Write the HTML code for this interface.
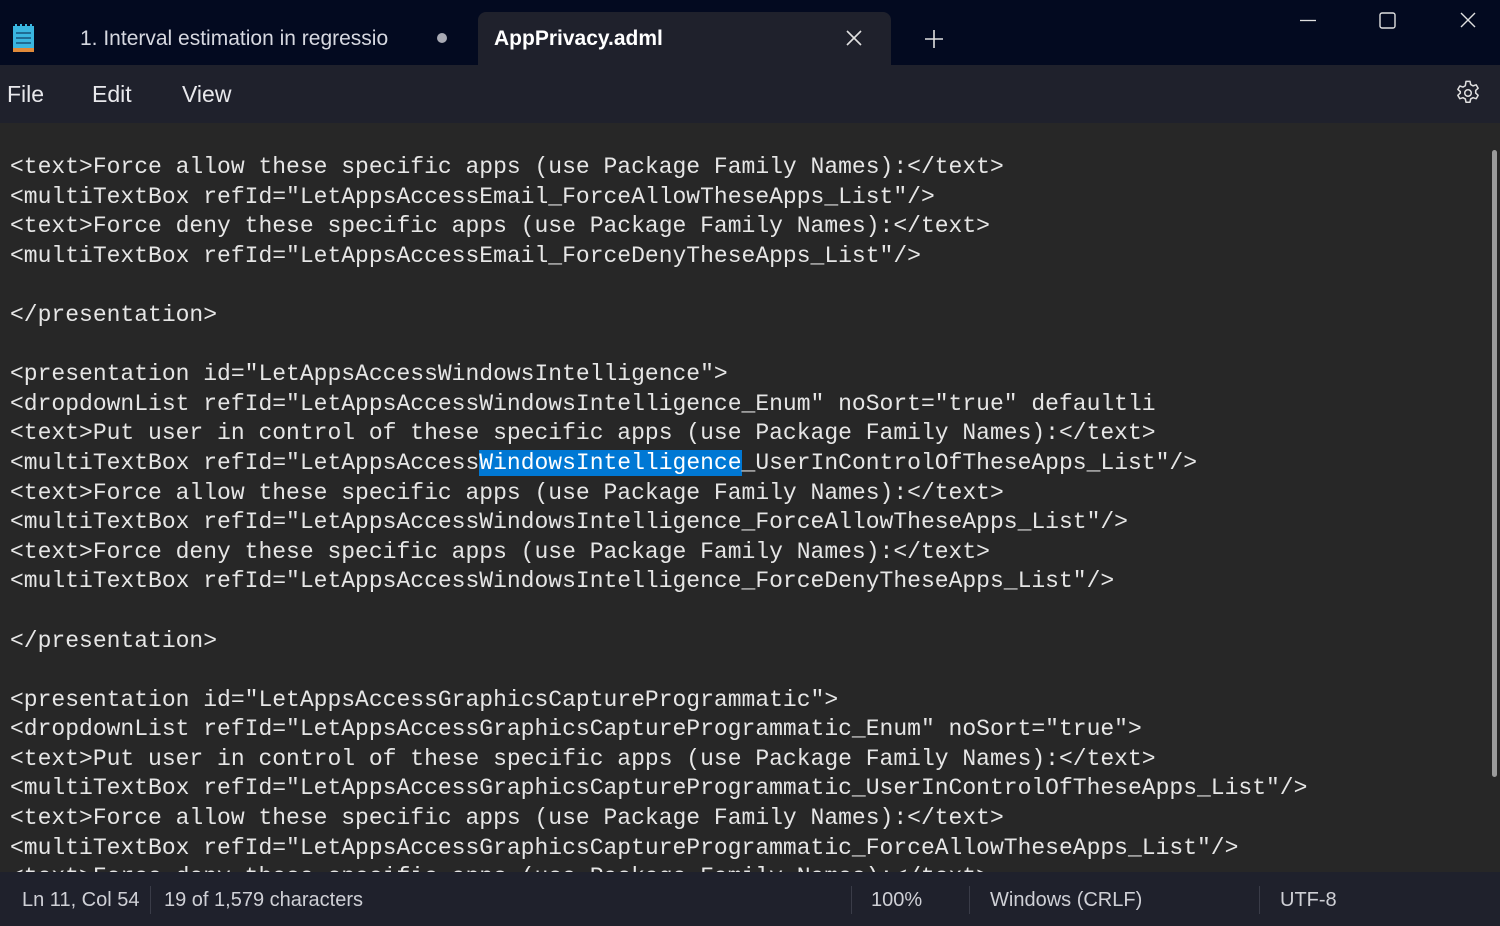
<!DOCTYPE html>
<html><head><meta charset="utf-8"><style>
*{margin:0;padding:0;box-sizing:border-box}
body{width:1500px;height:926px;overflow:hidden;background:#272727;font-family:"Liberation Sans",sans-serif;position:relative}
#title{position:absolute;left:0;top:0;width:1500px;height:65px;background:#030a20}
#tab{position:absolute;left:478px;top:12px;width:413px;height:54px;background:#1f212c;border-radius:8px 8px 0 0}
.t{position:absolute;color:#e8e8ec;font-size:21px}
#menu{position:absolute;left:0;top:65px;width:1500px;height:58px;background:#1f212c}
#ed{position:absolute;left:10px;top:153px;font-family:"Liberation Mono",monospace;font-size:23px;line-height:29.6px;color:#e6e6e6;white-space:pre;height:719px;overflow:hidden}
.hl{background:#0078d4;color:#fff}
#sb{position:absolute;left:1492px;top:150px;width:5px;height:627px;background:#9b9b9b;border-radius:3px}
#status{position:absolute;left:0;top:872px;width:1500px;height:54px;background:#1f212c;color:#cfd0d6;font-size:20px}
.sep{position:absolute;top:14px;width:1px;height:28px;background:#3a3c48}
</style></head><body>
<div id="title">
<svg style="position:absolute;left:12px;top:24px" width="23" height="29" viewBox="0 0 23 29"><rect x="1" y="2" width="21" height="24" fill="#3ab6e0"/><rect x="1" y="24" width="21" height="4" fill="#e08a3a"/><g stroke="#1a5a80" stroke-width="1.6"><line x1="4" y1="9" x2="19" y2="9"/><line x1="4" y1="14" x2="19" y2="14"/><line x1="4" y1="19" x2="19" y2="19"/></g><g fill="#3ab6e0"><rect x="3" y="0" width="2" height="3"/><rect x="8" y="0" width="2" height="3"/><rect x="13" y="0" width="2" height="3"/><rect x="18" y="0" width="2" height="3"/></g></svg>
<div class="t" style="left:80px;top:27px;color:#d6d8e0">1. Interval estimation in regressio</div>
<div style="position:absolute;left:437px;top:33px;width:10px;height:10px;border-radius:50%;background:#a8aab4"></div>
<div id="tab"></div>
<div class="t" style="left:494px;top:27px;font-weight:bold;color:#fff">AppPrivacy.adml</div>
<svg style="position:absolute;left:846px;top:30px" width="16" height="16"><path d="M1 1L15 15M15 1L1 15" stroke="#e0e0e0" stroke-width="1.6"/></svg>
<svg style="position:absolute;left:924px;top:29px" width="20" height="20"><path d="M10 1V19M1 10H19" stroke="#e0e0e0" stroke-width="1.6"/></svg>
<svg style="position:absolute;left:1300px;top:19px" width="16" height="3"><path d="M0 1.5H16" stroke="#e0e0e0" stroke-width="1.3"/></svg>
<svg style="position:absolute;left:1379px;top:12px" width="17" height="17"><rect x="1" y="1" width="15" height="15" rx="2" fill="none" stroke="#e0e0e0" stroke-width="1.4"/></svg>
<svg style="position:absolute;left:1460px;top:12px" width="16" height="16"><path d="M1 1L15 15M15 1L1 15" stroke="#e0e0e0" stroke-width="1.4"/></svg>
</div>
<div id="menu">
<div class="t" style="left:7px;top:16px;font-size:23px">File</div>
<div class="t" style="left:92px;top:16px;font-size:23px">Edit</div>
<div class="t" style="left:182px;top:16px;font-size:23px">View</div>
<svg style="position:absolute;left:1454px;top:14px" width="28" height="28" viewBox="0 0 24 24"><path d="M10.3 2h3.4l.6 2.8 2 1.1 2.7-.9 1.7 2.9-2.1 1.9v2.3l2.1 1.9-1.7 2.9-2.7-.9-2 1.1-.6 2.8h-3.4l-.6-2.8-2-1.1-2.7.9-1.7-2.9 2.1-1.9V10.8L3.3 8.9 5 6l2.7.9 2-1.1z" fill="none" stroke="#e0e0e0" stroke-width="1.3" stroke-linejoin="round"/><circle cx="12" cy="12" r="2.8" fill="none" stroke="#e0e0e0" stroke-width="1.3"/></svg>
</div>
<div id="ed">&lt;text&gt;Force allow these specific apps (use Package Family Names):&lt;/text&gt;
&lt;multiTextBox refId="LetAppsAccessEmail_ForceAllowTheseApps_List"/&gt;
&lt;text&gt;Force deny these specific apps (use Package Family Names):&lt;/text&gt;
&lt;multiTextBox refId="LetAppsAccessEmail_ForceDenyTheseApps_List"/&gt;

&lt;/presentation&gt;

&lt;presentation id="LetAppsAccessWindowsIntelligence"&gt;
&lt;dropdownList refId="LetAppsAccessWindowsIntelligence_Enum" noSort="true" defaultli
&lt;text&gt;Put user in control of these specific apps (use Package Family Names):&lt;/text&gt;
&lt;multiTextBox refId="LetAppsAccess<span class="hl">WindowsIntelligence</span>_UserInControlOfTheseApps_List"/&gt;
&lt;text&gt;Force allow these specific apps (use Package Family Names):&lt;/text&gt;
&lt;multiTextBox refId="LetAppsAccessWindowsIntelligence_ForceAllowTheseApps_List"/&gt;
&lt;text&gt;Force deny these specific apps (use Package Family Names):&lt;/text&gt;
&lt;multiTextBox refId="LetAppsAccessWindowsIntelligence_ForceDenyTheseApps_List"/&gt;

&lt;/presentation&gt;

&lt;presentation id="LetAppsAccessGraphicsCaptureProgrammatic"&gt;
&lt;dropdownList refId="LetAppsAccessGraphicsCaptureProgrammatic_Enum" noSort="true"&gt;
&lt;text&gt;Put user in control of these specific apps (use Package Family Names):&lt;/text&gt;
&lt;multiTextBox refId="LetAppsAccessGraphicsCaptureProgrammatic_UserInControlOfTheseApps_List"/&gt;
&lt;text&gt;Force allow these specific apps (use Package Family Names):&lt;/text&gt;
&lt;multiTextBox refId="LetAppsAccessGraphicsCaptureProgrammatic_ForceAllowTheseApps_List"/&gt;
&lt;text&gt;Force deny these specific apps (use Package Family Names):&lt;/text&gt;</div>
<div id="sb"></div>
<div id="status">
<div class="t" style="left:22px;top:17px;font-size:20px;color:#cfd0d6">Ln 11, Col 54</div>
<div class="sep" style="left:150px"></div>
<div class="t" style="left:164px;top:17px;font-size:20px;color:#cfd0d6">19 of 1,579 characters</div>
<div class="sep" style="left:851px"></div>
<div class="t" style="left:871px;top:17px;font-size:20px;color:#cfd0d6">100%</div>
<div class="sep" style="left:969px"></div>
<div class="t" style="left:990px;top:17px;font-size:20px;color:#cfd0d6">Windows (CRLF)</div>
<div class="sep" style="left:1259px"></div>
<div class="t" style="left:1280px;top:17px;font-size:20px;color:#cfd0d6">UTF-8</div>
</div>
</body></html>
